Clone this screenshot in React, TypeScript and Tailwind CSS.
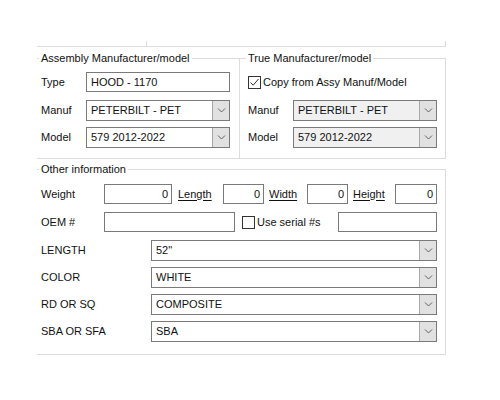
import React from "react";

function Chevron() {
    return (
        <svg width="9" height="5" viewBox="0 0 9 5" fill="none">
            <path d="M1 0.5 L4.5 4 L8 0.5" stroke="#606060" strokeWidth="1" />
        </svg>
    );
}

function Combo({ value, className = "", disabled = false }: { value: string; className?: string; disabled?: boolean }) {
    return (
        <div className={`flex h-[21px] border border-[#7a7a7a] ${disabled ? "bg-[#f0f0f0]" : "bg-white"} ${className}`}>
            <div className="flex-1 pl-[4px] leading-[19px] whitespace-nowrap overflow-hidden">{value}</div>
            <div className="w-[17px] flex items-center justify-center bg-[#e1e1e1] border-l border-[#a8a8a8]">
                <Chevron />
            </div>
        </div>
    );
}

function TextBox({ value = "", className = "", right = false }: { value?: string; className?: string; right?: boolean }) {
    return (
        <div
            className={`h-[20px] border border-[#7a7a7a] bg-white leading-[18px] whitespace-nowrap ${right ? "text-right pr-[3px]" : "pl-[4px]"} ${className}`}
        >
            {value}
        </div>
    );
}

function CheckBox({ checked = false }: { checked?: boolean }) {
    return (
        <div className="w-[13px] h-[13px] border border-[#333] bg-white flex items-center justify-center shrink-0">
            {checked && (
                <svg width="11" height="11" viewBox="0 0 11 11" fill="none">
                    <path d="M1.5 5.5 L4.2 8.2 L9.5 2" stroke="#333" strokeWidth="1" />
                </svg>
            )}
        </div>
    );
}

function Group({ title, className = "", legend = "ml-[2px]", children }: { title: string; className?: string; legend?: string; children: React.ReactNode }) {
    return (
        <fieldset className={`border-t border-r border-b border-[#dcdcdc] min-w-0 ${className}`}>
            <legend className={`px-[2px] leading-[14px] ${legend}`}>{title}</legend>
            {children}
        </fieldset>
    );
}

const u = "underline underline-offset-2";

export default function App() {
    const combos = [
        { label: "LENGTH", value: '52"' },
        { label: "COLOR", value: "WHITE" },
        { label: "RD OR SQ", value: "COMPOSITE" },
        { label: "SBA OR SFA", value: "SBA" },
    ];

    return (
        <div className="w-[500px] h-[400px] bg-white text-[11px] text-[#111] font-['Liberation_Sans',Arial,sans-serif]">
            <div className="w-[446px] pl-[37px] pt-[41px]">
                {/* bottom of the group above, cut off */}
                <div className="flex h-[6px] border-b border-r border-[#dcdcdc]">
                    <div className="w-[110px] border-r border-[#dcdcdc]" />
                </div>

                <div className="flex mt-[4px]">
                    <Group title="Assembly Manufacturer/model" className="w-[203px]">
                        <div className="flex flex-col pl-[4px] pt-[7px] pb-[10px]">
                            <div className="flex items-center h-[20px]">
                                <span className="w-[45px]">Type</span>
                                <TextBox value="HOOD - 1170" className="w-[144px]" />
                            </div>
                            <div className="flex items-center mt-[8px]">
                                <span className="w-[45px]">Manuf</span>
                                <Combo value="PETERBILT - PET" className="w-[144px]" />
                            </div>
                            <div className="flex items-center mt-[6px]">
                                <span className="w-[45px]">Model</span>
                                <Combo value="579 2012-2022" className="w-[144px]" />
                            </div>
                        </div>
                    </Group>

                    <Group title="True Manufacturer/model" className="w-[206px]" legend="ml-[6px]">
                        <div className="flex flex-col pl-[8px] pt-[7px] pb-[10px]">
                            <div className="flex items-center h-[20px] gap-[2px]">
                                <CheckBox checked />
                                <span>Copy from Assy Manuf/Model</span>
                            </div>
                            <div className="flex items-center mt-[8px]">
                                <span className="w-[45px]">Manuf</span>
                                <Combo value="PETERBILT - PET" className="w-[144px]" disabled />
                            </div>
                            <div className="flex items-center mt-[6px]">
                                <span className="w-[45px]">Model</span>
                                <Combo value="579 2012-2022" className="w-[144px]" disabled />
                            </div>
                        </div>
                    </Group>
                </div>

                <Group title="Other information" className="mt-[3px]">
                    <div className="flex flex-col pl-[4px] pt-[8px] pb-[12px]">
                        <div className="flex items-center h-[20px]">
                            <span className="w-[63px]">Weight</span>
                            <TextBox value="0" right className="w-[68px]" />
                            <span className={`w-[51px] pl-[6px] ${u}`}>Length</span>
                            <TextBox value="0" right className="w-[41px]" />
                            <span className={`w-[43px] pl-[5px] ${u}`}>Width</span>
                            <TextBox value="0" right className="w-[41px]" />
                            <span className={`w-[47px] pl-[5px] ${u}`}>Height</span>
                            <TextBox value="0" right className="w-[42px]" />
                        </div>
                        <div className="flex items-center h-[20px] mt-[8px]">
                            <span className="w-[63px]">OEM #</span>
                            <TextBox className="w-[131px]" />
                            <div className="flex items-center gap-[2px] ml-[7px] w-[96px]">
                                <CheckBox />
                                <span>Use serial #s</span>
                            </div>
                            <TextBox className="w-[99px]" />
                        </div>
                        {combos.map((c, i) => (
                            <div key={c.label} className={`flex items-center ${i === 0 ? "mt-[8px]" : "mt-[6px]"}`}>
                                <span className="w-[110px]">{c.label}</span>
                                <Combo value={c.value} className="w-[286px]" />
                            </div>
                        ))}
                    </div>
                </Group>
            </div>
        </div>
    );
}
